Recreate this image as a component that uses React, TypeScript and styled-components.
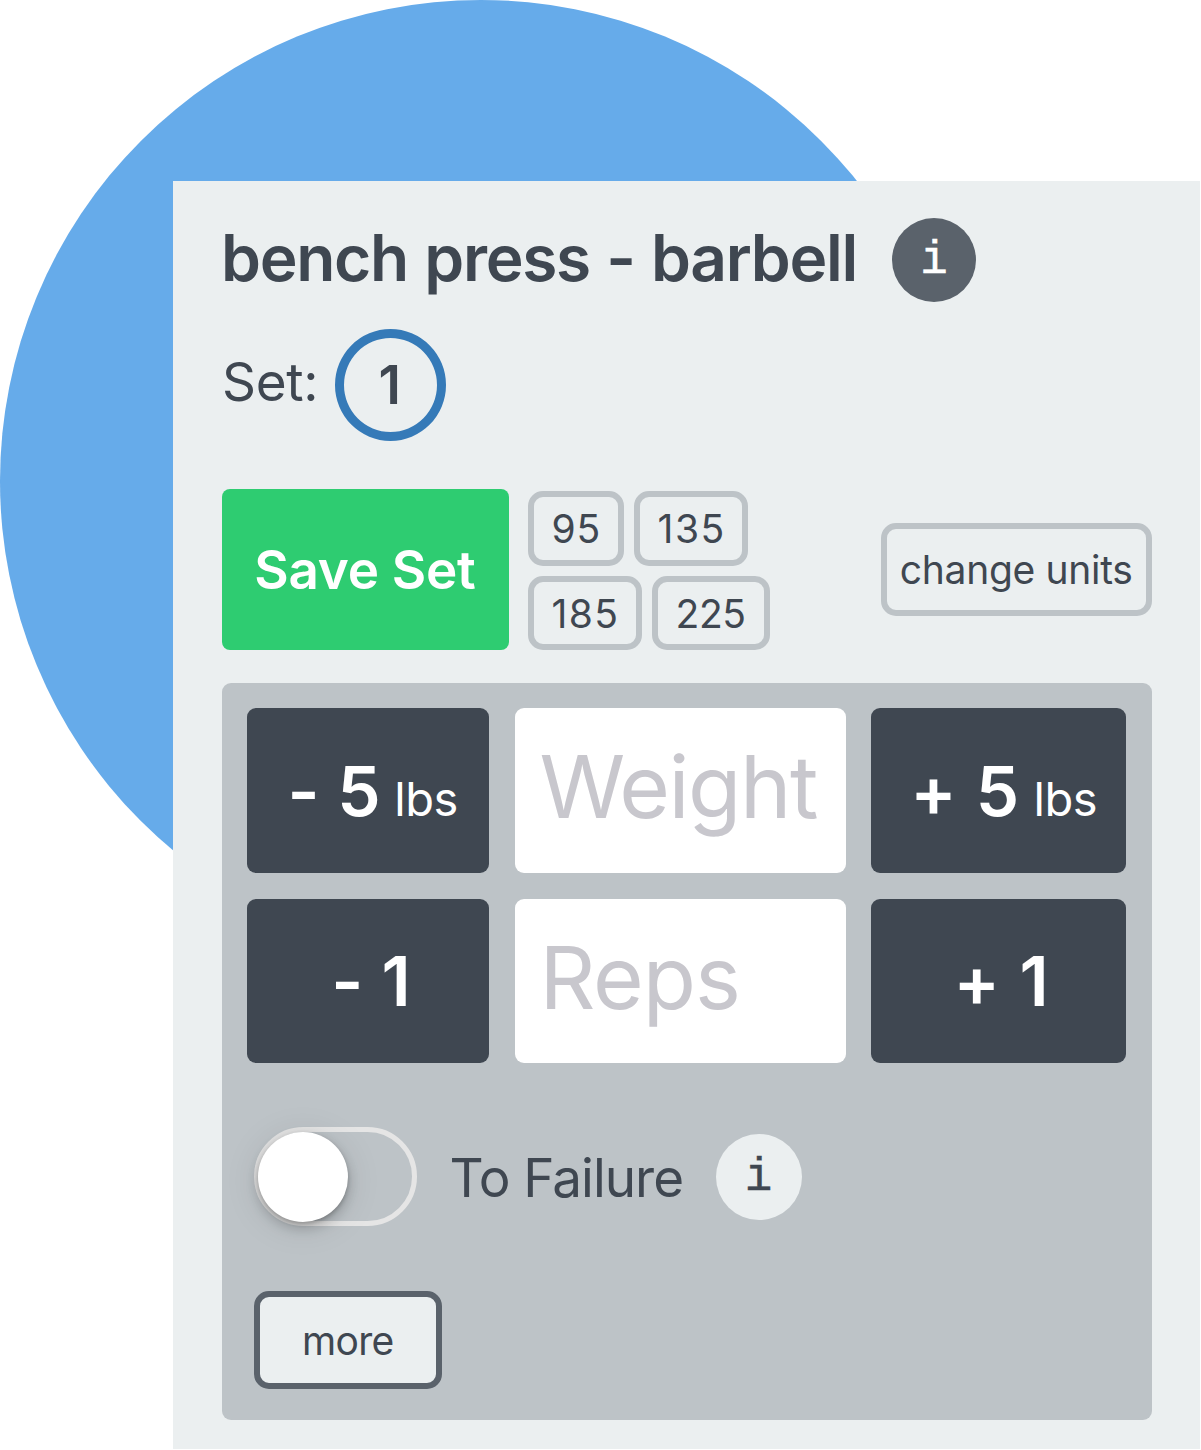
import React from "react";
import styled, { createGlobalStyle } from "styled-components";

const ink = "#3f4751";
const paper = "#ebeff0";
const silver = "#bdc3c7";
const slate = "#5a626b";

const GlobalStyle = createGlobalStyle`
  *, *::before, *::after { box-sizing: border-box; }
  body { margin: 0; background: #fff; }
  button, input { font: inherit; margin: 0; }
`;

const Page = styled.div`
  position: relative;
  width: 1201px;
  height: 1450px;
  padding: 181px 1px 1px 173px;
  overflow: hidden;
  font-family: Inter, "Liberation Sans", sans-serif;
  color: ${ink};
`;

const Backdrop = styled.div`
  position: absolute;
  top: 0;
  left: 0;
  width: 962px;
  height: 962px;
  border-radius: 50%;
  background: #66abea;
`;

const Panel = styled.main`
  position: relative;
  display: flex;
  flex-direction: column;
  height: 1268px;
  padding: 37px 48px 29px 49px;
  background: ${paper};
`;

const Header = styled.header`
  display: flex;
  align-items: center;
  height: 84px;
`;

const Title = styled.h1`
  width: 671px;
  margin: 0 0 0 -1px;
  padding-bottom: 4px;
  font-size: 64px;
  font-weight: 600;
  line-height: 78px;
  letter-spacing: -1.28px;
  word-spacing: 1.4px;
  white-space: nowrap;
`;

const InfoButton = styled.button<{ $size: number; $light?: boolean }>`
  display: flex;
  align-items: center;
  justify-content: center;
  flex: none;
  width: ${(p) => p.$size}px;
  height: ${(p) => p.$size}px;
  padding: ${(p) => (p.$light ? "2px 0 0" : "1px 0 0")};
  border: 0;
  border-radius: 50%;
  background: ${(p) => (p.$light ? paper : slate)};
  color: ${(p) => (p.$light ? ink : "#fff")};
  font: 46px/50px "Liberation Mono", monospace;
  -webkit-text-stroke: 0.4px currentColor;
  stroke-linejoin: round;
`;

const SetRow = styled.div`
  display: flex;
  align-items: center;
  height: 112px;
  margin-top: 27px;
`;

const SetLabel = styled.span`
  width: 113px;
  padding-bottom: 7px;
  font-size: 53px;
  line-height: 64px;
  letter-spacing: -0.3px;
`;

const SetNumber = styled.span`
  display: flex;
  align-items: center;
  width: 111px;
  height: 112px;
  padding-left: 34.5px;
  border: 9px solid #357ab8;
  border-radius: 50%;
  font-size: 53px;
  font-weight: 600;
  line-height: 64px;
`;

const Actions = styled.section`
  display: flex;
  align-items: center;
  height: 161px;
  margin-top: 48px;
`;

const SaveButton = styled.button`
  width: 287px;
  height: 161px;
  padding: 0 0 0 32.3px;
  border: 0;
  border-radius: 8px;
  background: #2ecc71;
  color: #fff;
  font-size: 53px;
  font-weight: 600;
  line-height: 64px;
  letter-spacing: -0.27px;
  text-align: left;
  white-space: nowrap;
`;

const Presets = styled.div`
  display: flex;
  flex-wrap: wrap;
  gap: 10px;
  width: 250px;
  margin-left: 19px;
  padding-top: 2px;
`;

const OutlineButton = styled.button<{
  $w: number;
  $h: number;
  $inset: number;
  $track?: number;
  $dark?: boolean;
}>`
  width: ${(p) => p.$w}px;
  height: ${(p) => p.$h}px;
  padding: 1px 0 0 ${(p) => p.$inset}px;
  border: 6px solid ${(p) => (p.$dark ? slate : silver)};
  border-radius: 15px;
  background: ${paper};
  color: ${ink};
  font-size: 39px;
  line-height: 48px;
  letter-spacing: ${(p) => p.$track ?? 0}px;
  text-align: left;
  white-space: nowrap;
`;

const UnitsSlot = styled.div`
  margin-left: auto;
`;

const Entry = styled.section`
  display: flex;
  flex-direction: column;
  height: 737px;
  margin-top: 33px;
  padding: 25px 26px 32px 25px;
  border-radius: 9px;
  background: ${silver};
`;

const Steppers = styled.div`
  display: grid;
  grid-template-columns: 242px 331px 255px;
  grid-template-rows: 165px 164px;
  column-gap: 25.5px;
  row-gap: 26px;
`;

const StepButton = styled.button<{ $inset: number; $track: number }>`
  display: flex;
  align-items: center;
  padding: 0 0 0 ${(p) => p.$inset}px;
  border: 0;
  border-radius: 9px;
  background: ${ink};
  color: #fff;
  font-size: 69px;
  font-weight: 600;
  line-height: 84px;
  letter-spacing: ${(p) => p.$track}px;
  white-space: nowrap;
`;

const StepLabel = styled.span`
  display: flex;
  align-items: baseline;
`;

const Unit = styled.span`
  margin-left: 13.4px;
  font-size: 47px;
  font-weight: 400;
  line-height: 1;
  letter-spacing: -0.4px;
`;

const Field = styled.input<{ $track: number }>`
  min-width: 0;
  width: 100%;
  padding: 0 0 8px 25px;
  border: 0;
  border-radius: 9px;
  background: #fff;
  color: ${ink};
  font-size: 87px;
  letter-spacing: ${(p) => p.$track}px;
  outline: none;

  &::placeholder {
    color: #c8c7cd;
    opacity: 1;
  }
`;

const FailureRow = styled.div`
  display: flex;
  align-items: center;
  height: 99px;
  margin: 64px 0 0 7px;
`;

const Toggle = styled.div`
  flex: none;
  width: 163px;
  height: 99px;
  border: 5px solid #e5e5e5;
  border-radius: 50px;
`;

const Knob = styled.div`
  width: 90px;
  height: 90px;
  margin: -0.5px 0 0 -1px;
  border-radius: 50%;
  background: #fff;
  box-shadow: 0 6px 13px rgba(0, 0, 0, 0.2), 0 2px 4px rgba(0, 0, 0, 0.2), 0 4px 36px rgba(0, 0, 0, 0.1);
`;

const FailureLabel = styled.span`
  width: 266px;
  margin-left: 32.6px;
  padding-top: 2px;
  font-size: 53px;
  line-height: 64px;
  letter-spacing: -1px;
  white-space: nowrap;
`;

const MoreSlot = styled.div`
  margin: 65px 0 0 7px;
`;

const presets = [
  { value: 95, w: 96, h: 75, track: 0.8 },
  { value: 135, w: 114, h: 75, track: 1.5 },
  { value: 185, w: 114, h: 74, track: 1.3 },
  { value: 225, w: 118, h: 74, track: -0.4 },
];

export default function App() {
  return (
    <Page>
      <GlobalStyle />
      <Backdrop />
      <Panel>
        <Header>
          <Title>bench press - barbell</Title>
          <InfoButton $size={84}>i</InfoButton>
        </Header>
        <SetRow>
          <SetLabel>Set:</SetLabel>
          <SetNumber>1</SetNumber>
        </SetRow>
        <Actions>
          <SaveButton>Save Set</SaveButton>
          <Presets>
            {presets.map((p) => (
              <OutlineButton key={p.value} $w={p.w} $h={p.h} $inset={17.6} $track={p.track}>
                {p.value}
              </OutlineButton>
            ))}
          </Presets>
          <UnitsSlot>
            <OutlineButton $w={271} $h={93} $inset={12.8} $track={-0.3}>
              change units
            </OutlineButton>
          </UnitsSlot>
        </Actions>
        <Entry>
          <Steppers>
            <StepButton $inset={40.6} $track={0.1}>
              <StepLabel>
                - 5<Unit>lbs</Unit>
              </StepLabel>
            </StepButton>
            <Field placeholder="Weight" $track={-1.5} />
            <StepButton $inset={39.2} $track={0.9}>
              <StepLabel>
                + 5<Unit>lbs</Unit>
              </StepLabel>
            </StepButton>
            <StepButton $inset={84.2} $track={0.4}>
              - 1
            </StepButton>
            <Field placeholder="Reps" $track={-1.1} />
            <StepButton $inset={82.5} $track={1.1}>
              + 1
            </StepButton>
          </Steppers>
          <FailureRow>
            <Toggle>
              <Knob />
            </Toggle>
            <FailureLabel>To Failure</FailureLabel>
            <InfoButton $size={86} $light>
              i
            </InfoButton>
          </FailureRow>
          <MoreSlot>
            <OutlineButton $w={188} $h={98} $inset={42} $track={-0.7} $dark>
              more
            </OutlineButton>
          </MoreSlot>
        </Entry>
      </Panel>
    </Page>
  );
}
